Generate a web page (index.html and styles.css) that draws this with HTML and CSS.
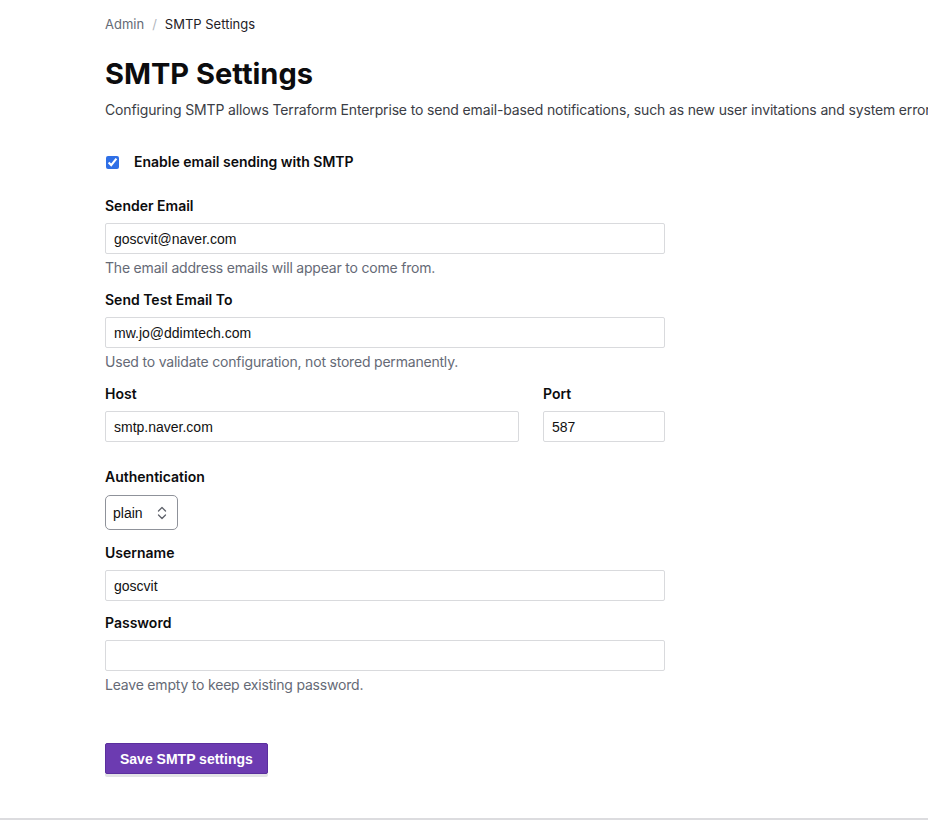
FILE: index.html
```html
<!DOCTYPE html>
<html lang="en">
<head>
<meta charset="utf-8">
<title>SMTP Settings</title>
<link rel="stylesheet" href="styles.css">
</head>
<body>
<main class="page">
  <nav class="crumbs">
    <span class="crumb-link">Admin</span>
    <span class="crumb-sep">/</span>
    <span class="crumb-current">SMTP Settings</span>
  </nav>
  <h1 class="title">SMTP Settings</h1>
  <p class="desc">Configuring SMTP allows Terraform Enterprise to send email-based notifications, such as new user invitations and system errors.</p>

  <form class="form">
    <label class="check-row">
      <input type="checkbox" class="check" checked>
      <span>Enable email sending with SMTP</span>
    </label>

    <div class="field first">
      <label class="label">Sender Email</label>
      <input class="input" type="text" value="goscvit@naver.com">
      <p class="help">The email address emails will appear to come from.</p>
    </div>

    <div class="field">
      <label class="label">Send Test Email To</label>
      <input class="input" type="text" value="mw.jo@ddimtech.com">
      <p class="help">Used to validate configuration, not stored permanently.</p>
    </div>

    <div class="row">
      <div class="field host">
        <label class="label">Host</label>
        <input class="input" type="text" value="smtp.naver.com">
      </div>
      <div class="field port">
        <label class="label">Port</label>
        <input class="input" type="text" value="587">
      </div>
    </div>

    <div class="field auth">
      <label class="label">Authentication</label>
      <div class="select-wrap">
        <select class="select">
          <option>plain</option>
        </select>
        <svg class="select-icon" width="10" height="14" viewBox="0 0 10 14" fill="none" stroke="#5f626b" stroke-width="1.3" stroke-linecap="round" stroke-linejoin="round">
          <path d="M1.5 5 L5 1.5 L8.5 5"/>
          <path d="M1.5 9 L5 12.5 L8.5 9"/>
        </svg>
      </div>
    </div>

    <div class="field user">
      <label class="label">Username</label>
      <input class="input" type="text" value="goscvit">
    </div>

    <div class="field">
      <label class="label">Password</label>
      <input class="input" type="password" value="">
      <p class="help">Leave empty to keep existing password.</p>
    </div>

    <div class="actions">
      <button type="button" class="btn">Save SMTP settings</button>
    </div>
  </form>
</main>
<footer class="footer"></footer>
</body>
</html>
```

FILE: styles.css
```css
* { box-sizing: border-box; }

html, body {
  margin: 0;
  padding: 0;
  background: #ffffff;
}

body {
  font-family: Inter, "Noto Sans", "Liberation Sans", sans-serif;
  color: #0c0c0e;
  overflow: hidden;
}

.page {
  padding: 14px 0 0 105px;
  height: 818px;
}

.crumbs {
  display: flex;
  align-items: center;
  gap: 8px;
  font-size: 13px;
  line-height: 20px;
  white-space: nowrap;
}

.crumb-link { color: #656a76; }
.crumb-sep { color: #b2b6bd; }
.crumb-current { color: #1f2126; }

.title {
  margin: 23px 0 0;
  font-size: 29px;
  line-height: 34px;
  font-weight: 700;
  color: #0c0c0e;
}

.desc {
  margin: 9px 0 0;
  font-size: 14px;
  line-height: 20px;
  color: #3b3d45;
  white-space: nowrap;
  letter-spacing: -0.15px;
}

.form {
  width: 560px;
  display: flex;
  flex-direction: column;
}

.check-row {
  margin-top: 32px;
  display: flex;
  align-items: center;
  gap: 15px;
  font-size: 14px;
  line-height: 20px;
  font-weight: 600;
  color: #0c0c0e;
}

.check {
  margin: 0 0 0 1px;
  width: 13px;
  height: 13px;
  accent-color: #2f6fe6;
}

.field {
  margin-top: 12px;
  display: flex;
  flex-direction: column;
}

.field.first { margin-top: 24px; }
.field.auth { margin-top: 25px; }
.field.user { margin-top: 13px; }

.label {
  font-size: 14px;
  line-height: 20px;
  font-weight: 600;
  color: #0c0c0e;
  margin-bottom: 7px;
}

.input {
  width: 100%;
  height: 31px;
  margin: 0;
  padding: 0 8px;
  border: 1px solid #d9dadd;
  border-radius: 2px;
  background: #ffffff;
  font-family: "Liberation Sans", Arial, sans-serif;
  font-size: 14px;
  color: #111111;
  outline: none;
}

.help {
  margin: 4px 0 0;
  font-size: 14px;
  line-height: 20px;
  color: #656a76;
  letter-spacing: -0.2px;
}

.row {
  display: flex;
  gap: 24px;
  margin-top: 12px;
}

.row .field { margin-top: 0; }
.host { flex: 1; }
.port { width: 122px; flex: none; }

.select-wrap {
  position: relative;
  width: 73px;
  height: 35px;
  margin-top: 1px;
}

.select {
  appearance: none;
  -webkit-appearance: none;
  width: 73px;
  height: 35px;
  margin: 0;
  padding: 0 0 0 7px;
  border: 1px solid #8f929a;
  border-radius: 5px;
  background: #ffffff;
  font-family: "Liberation Sans", Arial, sans-serif;
  font-size: 14px;
  color: #111111;
  outline: none;
}

.select-icon {
  position: absolute;
  left: 52px;
  top: 11px;
  pointer-events: none;
}

.actions {
  margin-top: 48px;
}

.btn {
  height: 31px;
  padding: 0 14px;
  border: 1px solid #5b2f9e;
  border-radius: 2px;
  background: #6c3bb1;
  box-shadow: 0 3px 0 #e3e3e6;
  color: #ffffff;
  font-family: "Liberation Sans", Arial, sans-serif;
  font-size: 14px;
  font-weight: 700;
  cursor: pointer;
}

.footer {
  border-top: 2px solid #dcdcdf;
  height: 5px;
}
```
